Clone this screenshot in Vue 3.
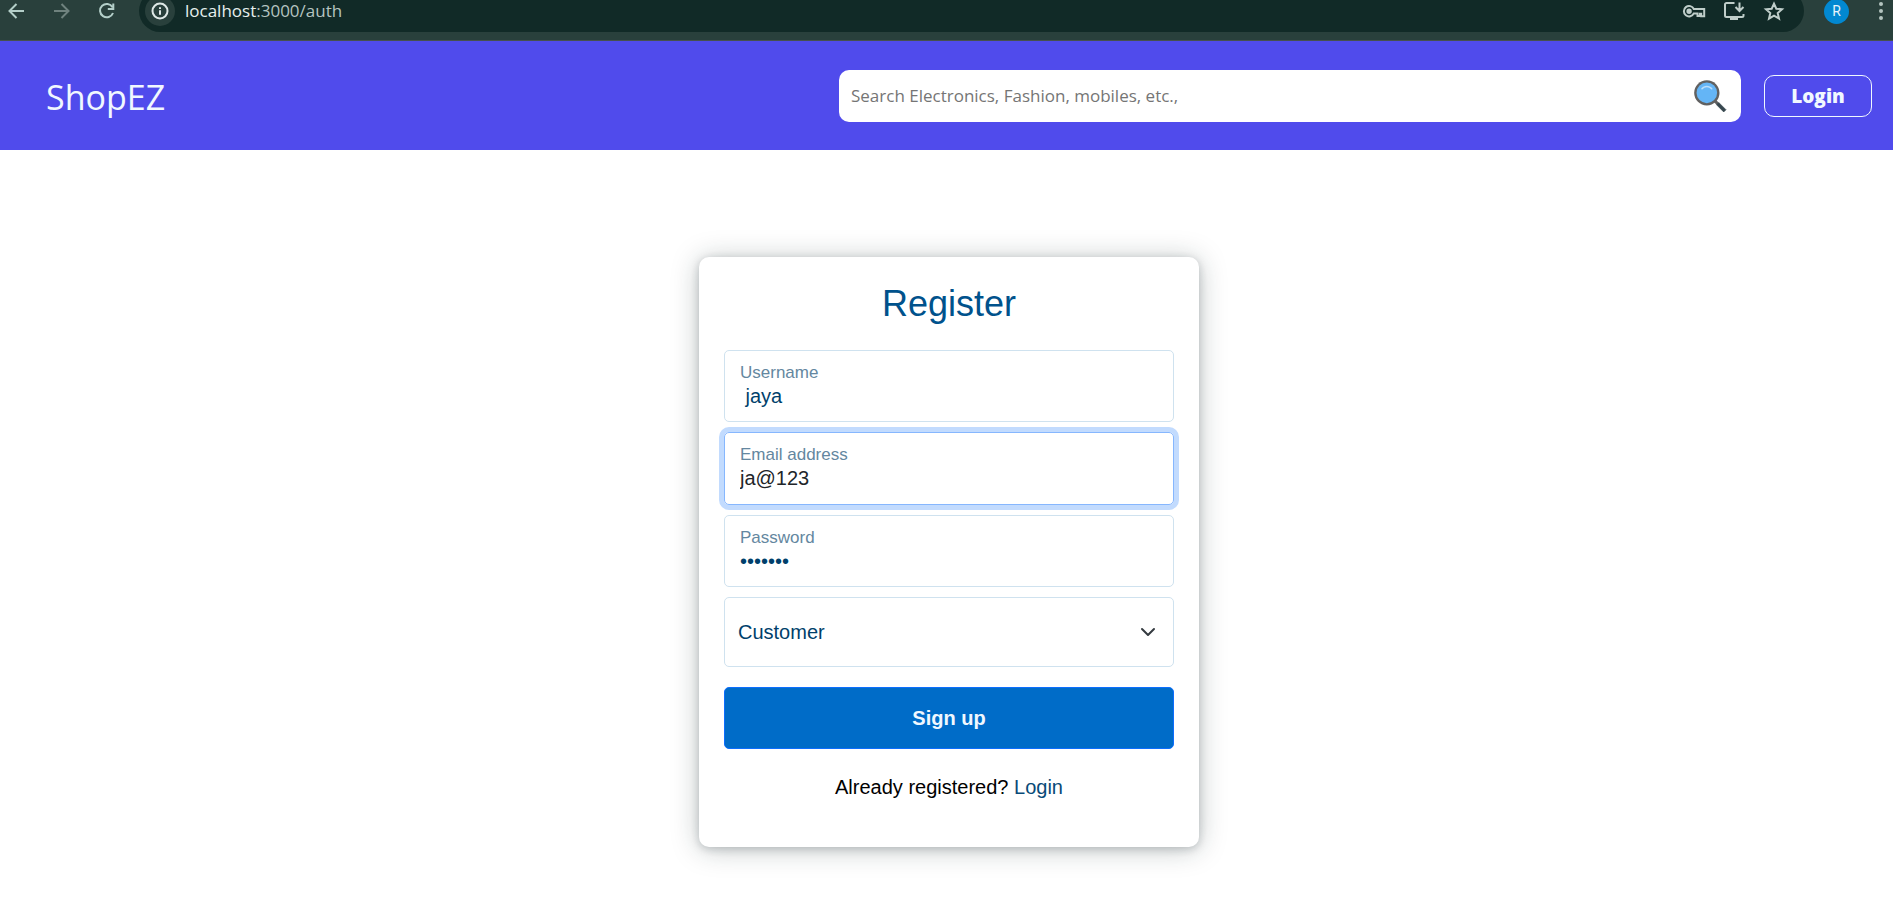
<script setup>
import { ref } from 'vue'

const search = ref('')
const username = ref(' jaya')
const email = ref('ja@123')
const password = ref('jaya123')
const role = ref('customer')
</script>

<template>
  <div class="page">
    <div class="toolbar">
      <div class="toolbar-row">
        <div class="nav-buttons">
          <button type="button" class="icon-btn" aria-label="Back">
            <svg viewBox="0 0 24 24"><path d="M19 12H5M11.500 5l-7 7 7 7" /></svg>
          </button>
          <button type="button" class="icon-btn dim" aria-label="Forward">
            <svg viewBox="0 0 24 24"><path d="M4 12h14M11.500 5l7 7-7 7" /></svg>
          </button>
          <button type="button" class="icon-btn" aria-label="Reload">
            <svg viewBox="0 0 24 24"><path d="M17.500 8.200A6.700 6.700 0 1 0 18 14M18.300 4.500v5.500h-5.500" /></svg>
          </button>
        </div>
        <div class="address">
          <button type="button" class="info" aria-label="Site information">
            <svg viewBox="0 0 20 20">
              <circle cx="10" cy="10" r="7.5" />
              <path d="M10 9.2v4.600M10 6.2v1.800" />
            </svg>
          </button>
          <span class="url"><span class="host">localhost</span>:3000/auth</span>
          <button type="button" class="icon-btn pale" aria-label="Passwords">
            <svg viewBox="0 0 24 24">
              <path d="M11.800 10A5.200 5.200 0 1 0 11.800 14.400H15.500v2.600h2.400V14.800h1.300v2.400h3V10z" />
              <circle class="solid" cx="7.1" cy="12.2" r="1.700" />
            </svg>
          </button>
          <button type="button" class="icon-btn pale" aria-label="Install app">
            <svg viewBox="0 0 24 24">
              <path d="M12.500 4H4.500a1.500 1.500 0 0 0-1.500 1.500v11a1.500 1.500 0 0 0 1.500 1.500h15.500a1.500 1.500 0 0 0 1.500-1.500V15M17.500 3.500v8M13.500 8l4 4 4-4M8 20h8" />
            </svg>
          </button>
          <button type="button" class="icon-btn pale" aria-label="Bookmark">
            <svg viewBox="0 0 24 24">
              <path d="M12 4.700l2.300 5 5.700.5-4.300 3.800 1.300 5.600-5-3-5 3 1.300-5.600L4 10.200l5.700-.5z" />
            </svg>
          </button>
        </div>
        <button type="button" class="avatar">R</button>
        <button type="button" class="more" aria-label="Menu">
          <svg viewBox="0 0 6 20">
            <circle cx="3" cy="3" r="2" /><circle cx="3" cy="10" r="2" /><circle cx="3" cy="17" r="2" />
          </svg>
        </button>
      </div>
    </div>

    <header class="navbar">
      <h1 class="brand">ShopEZ</h1>
      <form class="search" @submit.prevent>
        <input v-model="search" type="text" aria-label="Search products" placeholder="Search Electronics, Fashion, mobiles, etc.," />
        <button type="submit" aria-label="Search">
          <svg viewBox="0 0 48 48">
            <path d="M29 31.800l2.800-2.800 4 4-2.800 2.800z" fill="#616161" />
            <circle cx="20" cy="20" r="16" fill="#616161" />
            <path d="M32.400 35.200l2.800-2.800 8.900 8.900-2.800 2.800z" fill="#37474f" stroke="#37474f" />
            <circle cx="20" cy="20" r="13" fill="#64b5f6" />
            <path d="M26.900 14.200c-1.700-2-4.200-3.200-6.900-3.200s-5.200 1.200-6.900 3.200c-.4.4-.3 1.100.1 1.400.4.4 1.100.3 1.400-.1C16 13.900 17.900 13 20 13s4 .9 5.400 2.500c.2.2.5.4.8.4.2 0 .5-.1.6-.2.4-.4.4-1.100.1-1.500z" fill="#bbdefb" />
          </svg>
        </button>
      </form>
      <button type="button" class="login-btn">Login</button>
    </header>

    <main class="content">
      <form class="card" @submit.prevent>
        <h2>Register</h2>
        <div class="field">
          <label for="username">Username</label>
          <input id="username" v-model="username" type="text" />
        </div>
        <div class="field active">
          <label for="email">Email address</label>
          <input id="email" v-model="email" type="text" />
        </div>
        <div class="field">
          <label for="password">Password</label>
          <input id="password" v-model="password" type="password" />
        </div>
        <div class="select-box">
          <select v-model="role" aria-label="User type">
            <option value="customer">Customer</option>
            <option value="admin">Admin</option>
          </select>
          <svg viewBox="0 0 16 16"><path d="M2 5l6 6 6-6" /></svg>
        </div>
        <button type="submit" class="signup">Sign up</button>
        <p>Already registered? <a href="#login">Login</a></p>
      </form>
    </main>
  </div>
</template>

<style>
body {
  background: #fff;
}
</style>

<style scoped>
.page {
  font-family: "Liberation Sans", Arial, sans-serif;
  color: #000;
}
.page * {
  box-sizing: border-box;
}
button,
input,
select {
  font: inherit;
  margin: 0;
  padding: 0;
  border: 0;
  outline: 0;
  background: none;
}
button {
  flex: none;
}
svg {
  display: block;
}

/* browser toolbar */
.toolbar {
  height: 41px;
  overflow: hidden;
  background: #29403c;
  border-bottom: 1px solid #46504e;
}
.toolbar-row {
  display: flex;
  align-items: center;
  height: 42px;
  margin-top: -10px;
  padding: 0 9px 0 5px;
}
.nav-buttons {
  display: flex;
  gap: 21px;
  margin-right: 20px;
}
.icon-btn {
  width: 24px;
  height: 24px;
  color: #b4cfc9;
}
.icon-btn.dim {
  color: #6f827e;
}
.icon-btn.pale {
  color: #bfcdc9;
}
.icon-btn svg {
  width: 24px;
  height: 24px;
  fill: none;
  stroke: currentColor;
  stroke-width: 2;
}
.icon-btn .solid {
  fill: currentColor;
}
.address {
  flex: 1;
  display: flex;
  align-items: center;
  gap: 16px;
  height: 42px;
  padding: 0 18px 0 6px;
  border-radius: 21px;
  background: #112a27;
}
.info {
  display: grid;
  place-items: center;
  width: 30px;
  height: 30px;
  border-radius: 50%;
  background: #29403c;
}
.info svg {
  width: 20px;
  height: 20px;
  fill: none;
  stroke: #dfe9e7;
  stroke-width: 2;
}
.url {
  flex: 1;
  margin-left: -6px;
  font: 17px/20px "Noto Sans", "Open Sans", sans-serif;
  font-family: "Open Sans", "Noto Sans", sans-serif;
  color: #b5c4c0;
}
.host {
  color: #e6f0ee;
}
.avatar {
  width: 25px;
  height: 25px;
  margin: 0 29px 0 20px;
  border-radius: 50%;
  background: #0288d1;
  color: #e8f4fb;
  font: 14px/25px Roboto, sans-serif;
}
.more svg {
  width: 6px;
  height: 20px;
  fill: #b4c4c0;
}

/* site header */
.navbar {
  display: flex;
  align-items: center;
  height: 109px;
  padding: 0 21px 0 46px;
  background: #504bec;
}
.brand {
  flex: 1;
  margin: 0;
  padding-top: 2px;
  font: 400 34px/44px "Open Sans", "Noto Sans", sans-serif;
  color: #f0f8ff;
}
.search {
  display: flex;
  align-items: center;
  width: 902px;
  height: 52px;
  margin-right: 23px;
  padding: 0 12px;
  border-radius: 10px;
  background: #fff;
}
.search input {
  flex: 1;
  min-width: 0;
  font: 17px/24px "Open Sans", "Noto Sans", sans-serif;
}
.search input::placeholder {
  color: #757575;
  opacity: 1;
}
.search svg {
  width: 38px;
  height: 38px;
}
.login-btn {
  width: 108px;
  height: 42px;
  border: 1px solid #f0f8ff;
  border-radius: 10px;
  font: 800 19px/26px "Open Sans", "Noto Sans", sans-serif;
  color: #f0f8ff;
}

/* registration card */
.content {
  display: flex;
  justify-content: center;
  padding: 107px 0 58px 5px;
}
.card {
  display: flex;
  flex-direction: column;
  width: 500px;
  padding: 25px 25px 45px;
  border-radius: 10px;
  background: #fff;
  box-shadow: 0 2px 8px rgba(20, 35, 45, 0.2), 0 2px 28px rgba(20, 40, 40, 0.26);
}
h2 {
  margin: 0 0 25px;
  font-size: 36px;
  line-height: 43px;
  font-weight: 400;
  text-align: center;
  color: #00528c;
}
.field {
  display: flex;
  flex-direction: column;
  height: 72px;
  margin-bottom: 10px;
  padding: 12px 15px 0;
  border: 1px solid #cfe2ef;
  border-radius: 5px;
  color: #003f6b;
}
.field label {
  font-size: 17px;
  line-height: 20px;
  color: #6487a0;
}
.field input {
  width: 100%;
  font-size: 20px;
  line-height: 26px;
  height: 26px;
  color: inherit;
}
.field.active {
  height: 73px;
  border-color: #86b7fe;
  box-shadow: 0 0 0 5px #c2dbfe;
  color: #212529;
}
.select-box {
  position: relative;
  margin-bottom: 20px;
}
.select-box select {
  display: block;
  width: 100%;
  height: 70px;
  padding: 0 50px 0 13px;
  border: 1px solid #cfe2ef;
  border-radius: 5px;
  appearance: none;
  font-size: 20px;
  color: #003f6b;
}
.select-box svg {
  position: absolute;
  right: 18px;
  top: 27px;
  width: 16px;
  height: 16px;
  fill: none;
  stroke: #343a40;
  stroke-width: 2;
  stroke-linecap: round;
  stroke-linejoin: round;
  pointer-events: none;
}
.signup {
  height: 62px;
  border: 1px solid #0d6efd;
  border-radius: 5px;
  background: #006cc8;
  color: #f0f8ff;
  font-size: 20px;
  font-weight: 700;
}
p {
  margin: 23px 0 0;
  font-size: 20px;
  line-height: 30px;
  text-align: center;
}
a {
  color: #084a78;
  text-decoration: none;
}
</style>
